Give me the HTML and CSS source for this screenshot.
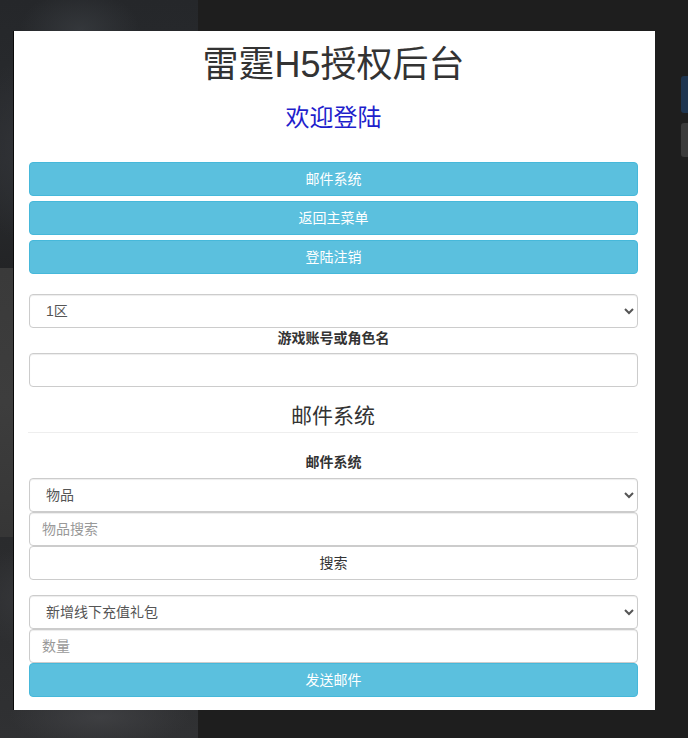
FILE: index.html
```html
<!DOCTYPE html>
<html lang="zh-CN">
<head>
<meta charset="utf-8">
<title>雷霆H5授权后台</title>
<link rel="stylesheet" href="styles.css">
</head>
<body>
<div class="backdrop">
  <div class="art art-top"></div>
  <div class="art art-mid"></div>
  <div class="art art-bottom"></div>
  <div class="edge edge-blue"></div>
  <div class="edge edge-gray"></div>
</div>
<main class="panel">
  <h1 class="title">雷霆H5授权后台</h1>
  <h2 class="subtitle">欢迎登陆</h2>
  <div class="menu">
    <button class="btn btn-info">邮件系统</button>
    <button class="btn btn-info">返回主菜单</button>
    <button class="btn btn-info">登陆注销</button>
  </div>
  <select class="control select first-select">
    <option>1区</option>
  </select>
  <label class="field-label">游戏账号或角色名</label>
  <input class="control" type="text">
  <h3 class="section-title">邮件系统</h3>
  <label class="field-label second-label">邮件系统</label>
  <div class="stack">
    <select class="control select"><option>物品</option></select>
    <input class="control" type="text" placeholder="物品搜索">
    <button class="btn btn-default">搜索</button>
  </div>
  <div class="stack stack-gap">
    <select class="control select"><option>新增线下充值礼包</option></select>
    <input class="control" type="text" placeholder="数量">
    <button class="btn btn-info">发送邮件</button>
  </div>
</main>
</body>
</html>
```
FILE: styles.css
```css
* { box-sizing: border-box; }
html, body {
  margin: 0;
  padding: 0;
}
body {
  width: 688px;
  height: 738px;
  overflow: hidden;
  background: #1e1e1e;
  position: relative;
  font-family: "Liberation Sans", "Noto Sans CJK SC", sans-serif;
  color: #333;
}
.backdrop {
  position: absolute;
  inset: 0;
  z-index: 0;
}
.art {
  position: absolute;
  left: 0;
  width: 198px;
}
.art-top {
  top: 0;
  height: 268px;
  background:
    radial-gradient(ellipse 60px 40px at 80px 30px, #34373b 0%, rgba(40,42,46,0) 100%),
    radial-gradient(ellipse 50px 90px at 20px 150px, #303236 0%, rgba(40,42,46,0) 100%),
    linear-gradient(180deg, #25272a 0%, #2a2c2f 60%, #232426 100%);
}
.art-mid {
  top: 268px;
  height: 269px;
  background: linear-gradient(180deg, #3a3a3a 0%, #3d3d3d 50%, #363636 100%);
}
.art-bottom {
  top: 537px;
  height: 201px;
  background:
    radial-gradient(ellipse 90px 30px at 100px 180px, #3e3f42 0%, rgba(40,40,40,0) 100%),
    radial-gradient(ellipse 60px 50px at 30px 60px, #36373a 0%, rgba(40,40,40,0) 100%),
    linear-gradient(180deg, #2a2b2d 0%, #303133 100%);
}
.edge {
  position: absolute;
  left: 681px;
  width: 10px;
  border-radius: 3px;
}
.edge-blue { top: 76px; height: 37px; background: #1e3550; }
.edge-gray { top: 123px; height: 34px; background: #3a3a3a; }

.panel {
  position: relative;
  z-index: 1;
  margin: 31px 0 0 14px;
  width: 641px;
  background: #fff;
  padding: 14px 17px 13px 15px;
  display: flex;
  flex-direction: column;
  box-shadow: -1px 0 0 #0a0a0a;
}
.title {
  margin: 0;
  font-size: 36px;
  line-height: 40px;
  font-weight: normal;
  text-align: center;
  color: #333;
}
.subtitle {
  margin: 18px 0 0;
  font-size: 24px;
  line-height: 30px;
  font-weight: normal;
  text-align: center;
  color: #1f1fcc;
}
.menu {
  margin-top: 29px;
  display: flex;
  flex-direction: column;
  gap: 5px;
}
.btn {
  display: block;
  width: 100%;
  height: 34px;
  margin: 0;
  border-radius: 4px;
  font-family: inherit;
  font-size: 14px;
  line-height: 20px;
  text-align: center;
  cursor: pointer;
}
.btn-info {
  background: #5bc0de;
  border: 1px solid #46b8da;
  color: #fff;
}
.btn-default {
  background: #fff;
  border: 1px solid #ccc;
  color: #333;
}
.control {
  display: block;
  width: 100%;
  height: 34px;
  margin: 0;
  padding: 6px 12px;
  font-family: inherit;
  font-size: 14px;
  line-height: 20px;
  color: #555;
  background: #fff;
  border: 1px solid #ccc;
  border-radius: 4px;
  box-shadow: inset 0 1px 1px rgba(0,0,0,.075);
}
.control::placeholder { color: #999; }
.first-select { margin-top: 20px; }
.field-label {
  display: block;
  font-size: 14px;
  line-height: 20px;
  font-weight: bold;
  text-align: center;
  color: #333;
  margin-bottom: 5px;
}
.section-title {
  margin: 15px 0 0 -1px;
  font-size: 21px;
  line-height: 28px;
  padding-bottom: 2px;
  font-weight: normal;
  text-align: center;
  color: #333;
  border-bottom: 1px solid #eee;
}
.second-label {
  margin-top: 19px;
  margin-bottom: 6px;
}
.stack {
  display: flex;
  flex-direction: column;
}
.stack-gap { margin-top: 15px; }
```
